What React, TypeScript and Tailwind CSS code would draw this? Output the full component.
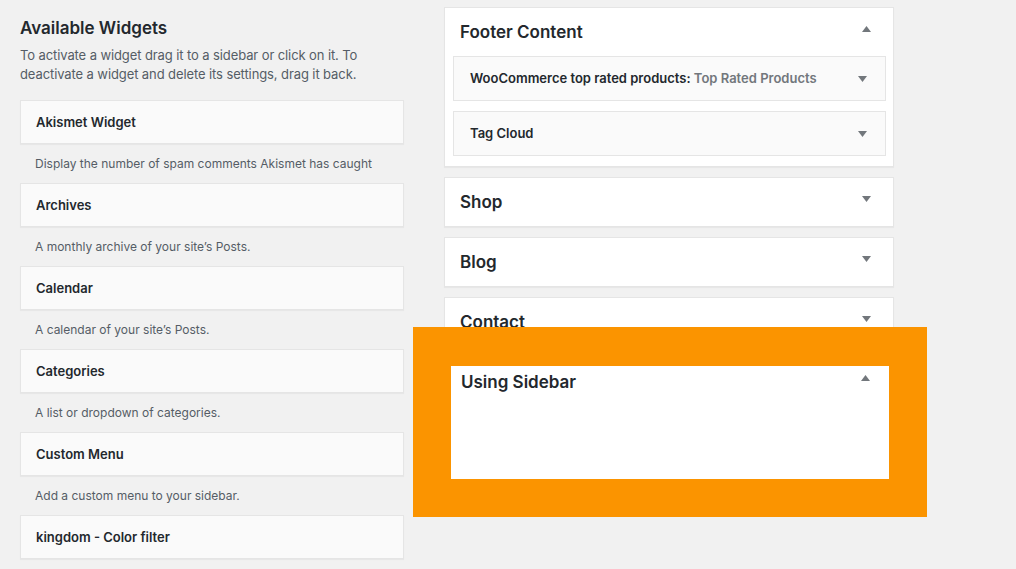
import type { JSX } from 'react'

type Widget = { title: string; desc: string }

const widgets: Widget[] = [
  { title: 'Akismet Widget', desc: 'Display the number of spam comments Akismet has caught' },
  { title: 'Archives', desc: 'A monthly archive of your site’s Posts.' },
  { title: 'Calendar', desc: 'A calendar of your site’s Posts.' },
  { title: 'Categories', desc: 'A list or dropdown of categories.' },
  { title: 'Custom Menu', desc: 'Add a custom menu to your sidebar.' },
  { title: 'kingdom - Color filter', desc: '' },
]

function Arrow({ up, className = '' }: { up?: boolean; className?: string }): JSX.Element {
  return (
    <svg width="9" height="6" viewBox="0 0 9 6" className={'shrink-0 ' + className} aria-hidden="true">
      {up ? <polygon points="0,6 4.5,0 9,6" fill="#72777c" /> : <polygon points="0,0 9,0 4.5,6" fill="#72777c" />}
    </svg>
  )
}

function SidebarBox({ name, up, children }: { name: string; up?: boolean; children?: React.ReactNode }): JSX.Element {
  return (
    <div className="bg-white border border-[#e5e5e5] shadow-[0_1px_1px_rgba(0,0,0,0.04)]">
      <div className="h-[48px] flex items-center justify-between pl-[15px] pr-[22px]">
        <h3 className="text-[17px] font-semibold text-[#23282d] pt-[1px]">{name}</h3>
        <Arrow up={up} className="mb-[6px]" />
      </div>
      {children}
    </div>
  )
}

export default function App(): JSX.Element {
  return (
    <div
      className="min-h-screen bg-[#f1f1f1] flex items-start overflow-hidden"
      style={{ fontFamily: 'Inter, "Liberation Sans", sans-serif' }}
    >
      {/* Available widgets */}
      <div className="ml-[20px] w-[384px] pt-[16px] shrink-0">
        <h2 className="text-[17px] leading-[24px] font-semibold text-[#23282d]">Available Widgets</h2>
        <p className="mt-[6px] text-[13px] leading-[19px] text-[#555d66] tracking-[-0.1px]">
          To activate a widget drag it to a sidebar or click on it. To deactivate a widget and delete its settings, drag it back.
        </p>
        <div className="mt-[16px] flex flex-col">
          {widgets.map((w) => (
            <div key={w.title}>
              <div className="h-[44px] flex items-center px-[15px] pt-[2px] bg-[#fafafa] border border-[#e5e5e5] shadow-[0_1px_1px_rgba(0,0,0,0.04)]">
                <span className="text-[13px] font-semibold text-[#23282d]">{w.title}</span>
              </div>
              {w.desc && (
                <p className="px-[15px] pt-[11px] pb-[10px] text-[12px] leading-[18px] text-[#555d66] whitespace-nowrap">
                  {w.desc}
                </p>
              )}
            </div>
          ))}
        </div>
      </div>

      {/* Sidebars */}
      <div className="relative ml-[40px] mt-[7px] w-[450px] shrink-0 flex flex-col gap-[10px]">
        <SidebarBox name="Footer Content" up>
          <div className="flex flex-col gap-[10px] pl-[8px] pr-[7px] pb-[10px]">
            <div className="h-[45px] flex items-center justify-between pl-[16px] pr-[18px] bg-[#fafafa] border border-[#e5e5e5]">
              <span className="text-[13px] font-semibold text-[#23282d]">
                WooCommerce top rated products: <span className="text-[#72777c]">Top Rated Products</span>
              </span>
              <Arrow />
            </div>
            <div className="h-[45px] flex items-center justify-between pl-[16px] pr-[18px] bg-[#fafafa] border border-[#e5e5e5]">
              <span className="text-[13px] font-semibold text-[#23282d]">Tag Cloud</span>
              <Arrow />
            </div>
          </div>
        </SidebarBox>
        <SidebarBox name="Shop" />
        <SidebarBox name="Blog" />
        <SidebarBox name="Contact" />

        {/* Highlight overlay */}
        <div className="absolute left-[-31px] top-[320px] w-[514px] h-[190px] bg-[#fb9400] pt-[39px] pl-[38px]">
          <div className="w-[438px] h-[113px] bg-white">
            <div className="flex items-start justify-between pl-[10px] pr-[19px] pt-[4px]">
              <h3 className="text-[17px] leading-[24px] font-semibold text-[#23282d]">Using Sidebar</h3>
              <Arrow up className="mt-[5px]" />
            </div>
          </div>
        </div>
      </div>
    </div>
  )
}
